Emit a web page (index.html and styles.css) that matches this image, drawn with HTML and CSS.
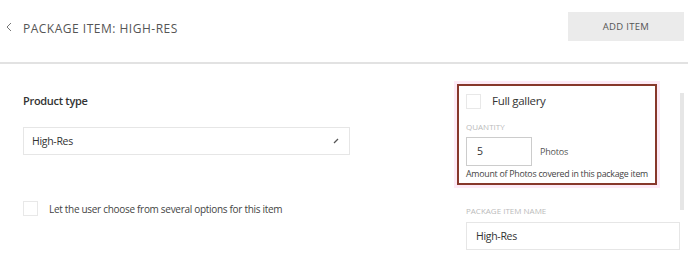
FILE: index.html
```html
<!DOCTYPE html>
<html lang="en">
<head>
  <meta charset="UTF-8" />
  <title>Package Item</title>
  <link rel="stylesheet" href="styles.css">
</head>
<body>
  <header class="topbar">
    <div class="title">
      <svg class="back" width="8" height="10" viewBox="0 0 8 10"><path d="M6 1 L2 5 L6 9" fill="none" stroke="#777" stroke-width="1" /></svg>
      <h1>Package item: High-Res</h1>
    </div>
    <button class="add-btn">Add item</button>
  </header>

  <div class="content">
    <div class="main">
      <h3>Product type</h3>
      <div class="select">
        <span>High-Res</span>
        <svg width="6" height="6" viewBox="0 0 6 6"><path d="M1 5 L5 1" stroke="#555" stroke-width="1.2" /></svg>
      </div>
      <label class="check-row">
        <span class="box"></span>
        Let the user choose from several options for this item
      </label>
    </div>

    <div class="side">
      <div class="gallery">
        <label class="gallery-check">
          <span class="box"></span>
          Full gallery
        </label>
        <div class="label">Quantity</div>
        <div class="qty-row">
          <div class="qty">5</div>
          <span>Photos</span>
        </div>
        <div class="hint">Amount of Photos covered in this package item</div>
      </div>

      <div class="field">
        <div class="label">Package item name</div>
        <div class="text-input">High-Res</div>
      </div>
    </div>

    <div class="scrollbar"></div>
  </div>
</body>
</html>
```

FILE: styles.css
```css
body {
  margin: 0;
  font-family: 'Open Sans', sans-serif;
  color: #333;
  background: #fff;
}

.topbar {
  display: flex;
  justify-content: space-between;
  align-items: center;
  height: 62px;
  border-bottom: 2px solid #e2e2e2;
  padding: 0 4px 0 5px;
}

.title {
  display: flex;
  align-items: center;
  margin-top: -5px;
}

.back {
  margin-top: -4px;
  margin-right: 10px;
}

h1 {
  margin: 0;
  font-size: 12px;
  font-weight: 400;
  letter-spacing: 0.5px;
  text-transform: uppercase;
  color: #555;
}

.add-btn {
  width: 116px;
  height: 29px;
  margin-top: -9px;
  border: none;
  background: #ebebeb;
  font-family: 'Open Sans', sans-serif;
  font-size: 9.5px;
  letter-spacing: 0.3px;
  text-transform: uppercase;
  color: #555;
}

.content {
  display: flex;
}

.main {
  width: 327px;
  padding-left: 23px;
  padding-top: 27px;
}

h3 {
  margin: 0;
  font-size: 11px;
  font-weight: 600;
  letter-spacing: -0.3px;
  line-height: 20px;
  color: #333;
}

.select {
  display: flex;
  justify-content: space-between;
  align-items: center;
  height: 26px;
  margin-top: 16px;
  padding: 0 10px 0 8px;
  border: 1px solid #e6e6e6;
  font-size: 10.5px;
  letter-spacing: -0.3px;
}

.check-row {
  display: flex;
  align-items: center;
  gap: 11px;
  margin-top: 46px;
  font-size: 10px;
  letter-spacing: -0.3px;
  color: #444;
}

.box {
  width: 13px;
  height: 13px;
  border: 1px solid #e8e8e8;
  flex-shrink: 0;
}

.side {
  width: 223px;
  margin-left: 107px;
  padding-top: 20px;
}

.gallery {
  width: 182px;
  padding: 6px 7px 3px 7px;
  border: 2px solid #87382b;
  box-shadow: 0 0 0 3px #fdeaf6;
}

.gallery-check {
  display: flex;
  align-items: center;
  gap: 11px;
  font-size: 11.5px;
  letter-spacing: -0.3px;
  line-height: 18px;
}

.label {
  font-size: 8px;
  line-height: 12px;
  color: #bbb;
  text-transform: uppercase;
}

.gallery .label {
  margin-top: 11px;
}

.qty-row {
  display: flex;
  align-items: center;
  gap: 8px;
  margin-top: 4px;
  font-size: 9px;
  letter-spacing: -0.2px;
  color: #555;
}

.qty {
  width: 54px;
  height: 27px;
  line-height: 27px;
  padding-left: 10px;
  border: 1px solid #ccc;
  font-size: 10.5px;
  color: #333;
}

.hint {
  margin-top: 2px;
  font-size: 8.8px;
  line-height: 12px;
  letter-spacing: -0.25px;
  white-space: nowrap;
  color: #444;
}

.field {
  padding-left: 9px;
  margin-top: 20px;
}

.text-input {
  height: 26px;
  line-height: 26px;
  margin-top: 5px;
  padding-left: 9px;
  border: 1px solid #e6e6e6;
  font-size: 10.5px;
  letter-spacing: -0.3px;
}

.scrollbar {
  width: 4px;
  height: 117px;
  margin-top: 29px;
  background: #e6e6e6;
}
```
